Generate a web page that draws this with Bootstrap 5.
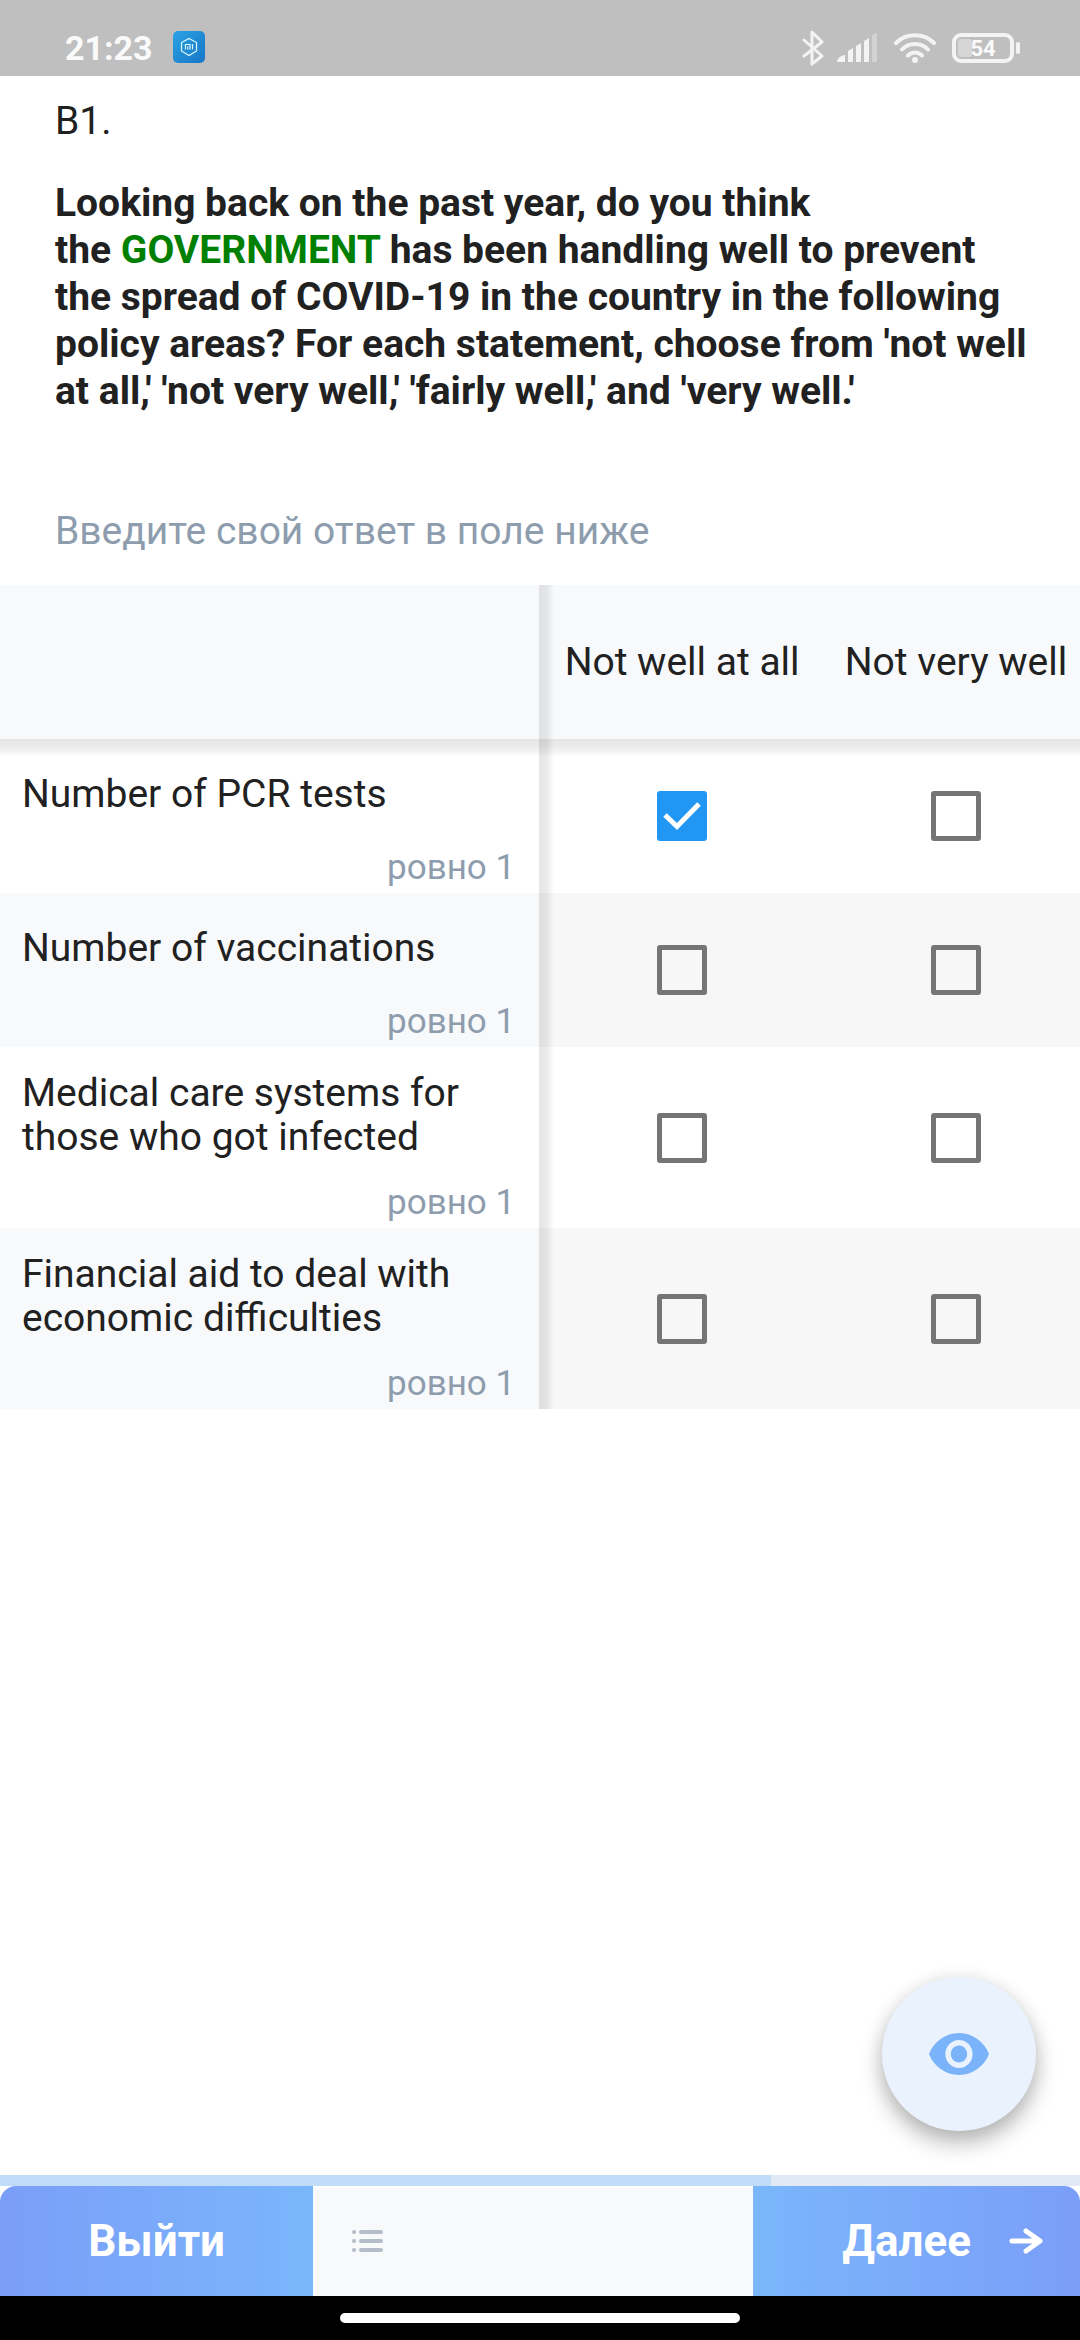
<!DOCTYPE html>
<html lang="ru">
<head>
<meta charset="utf-8">
<meta name="viewport" content="width=device-width, initial-scale=1">
<title>B1</title>
<link href="https://cdn.jsdelivr.net/npm/bootstrap@5.3.0/dist/css/bootstrap.min.css" rel="stylesheet">
<style>
  body { font-family: Roboto, sans-serif; font-size: 39px; line-height: 44px; color: #212121; background: #fff; }
  svg { display: block; flex: none; }

  .status-bar { height: 76px; padding: 20px 60px 0 65px; background: #bfbfbf; color: #fafafa; }
  .status-time { font-size: 34px; font-weight: 700; line-height: 40px; }
  .status-icons { color: #f3f3f3; }

  .question { padding: 22px 45px 0 55px; line-height: 47px; }
  .question-text { margin-top: 35px; font-weight: 700; }
  .question-text em { font-style: normal; color: #008000; }
  .question-hint { margin-top: 93px; padding-bottom: 30px; color: #8e9dae; }

  .grid-wrap { overflow: hidden; }
  .answers { width: calc(100% + 7px); table-layout: fixed; }
  .answers th, .answers td { border: 0; padding: 0; font-weight: 400; color: inherit; vertical-align: middle; }
  .answers .col-area { width: 49.6%; }
  .answers thead th { height: 154px; background-color: #f8f9fb; text-align: center; }
  .answers tbody th { padding: 24px 24px 5px 22px; background-color: #fff; }
  .answers tbody tr:nth-child(even) th { background-color: #f8f9fb; }
  .answers tbody tr:nth-child(even) td { background-color: #f7f7f7; }
  .answers td { text-align: center; }
  .answers th:not(:first-child), .answers td { padding-left: 12px; }
  .area-label { min-height: 61px; }
  .area-rule { margin-top: 24px; font-size: 35px; line-height: 40px; color: #8e9dae; }

  .answers { --edge-x: linear-gradient(90deg, rgba(0,0,0,.1), rgba(0,0,0,.08) 8px, transparent 15px);
             --edge-y: linear-gradient(180deg, rgba(0,0,0,.1), rgba(0,0,0,.08) 8px, transparent 18px); }
  .answers tr > :nth-child(2) { background-image: var(--edge-x); }
  .answers tbody tr:first-child > * { background-image: var(--edge-y); }
  .answers tbody tr:first-child > :nth-child(2) { background-image: var(--edge-x), var(--edge-y); }

  .answers .form-check-input { display: inline-block; float: none; width: 50px; height: 50px; margin: 0; vertical-align: middle;
    border: 5px solid #757575; border-radius: 3px; background-color: transparent; }
  .answers .form-check-input:checked { border-color: #2196f3; background-color: #2196f3; background-size: 50px 50px; background-origin: border-box;
    background-image: url("data:image/svg+xml,%3Csvg xmlns='http://www.w3.org/2000/svg' viewBox='0 0 50 50'%3E%3Cpath d='M8 24 20 35.500 42 13' fill='none' stroke='%23fff' stroke-width='5'/%3E%3C/svg%3E"); }

  .fab { right: 44px; bottom: 44px; width: 154px; height: 154px; padding: 0; border: 0; background: #eaf2fe; color: #7ab3fa;
    box-shadow: 0 12px 22px rgba(0,0,0,.28), 0 0 18px rgba(0,0,0,.07); }
  .fab:hover { background: #dfebfd; color: #7ab3fa; }

  .survey-progress { height: 11px; border-radius: 0; background: #e1e9f6; }
  .survey-progress .progress-bar { background: #c1dcf8; }
  .action-bar { height: 110px; background: #fff; }
  .action { border: 0; color: #fff; font-size: 44px; font-weight: 700; line-height: 52px; }
  .action-exit { width: 29%; padding: 0; border-radius: 16px 0 0 0; background: linear-gradient(90deg, #7b9ef9, #7ab6fa); }
  .action-next { width: 30.3%; padding: 0 37px 0 0; gap: 38px; border-radius: 0 16px 0 0; background: linear-gradient(90deg, #7ab6fa, #7b9ef9); }
  .action-mid { background: #f8f9fb; border-top: 2px solid #fff; }
  .action-list { padding: 0 0 2px 39px; border: 0; background: none; color: #b4bdc9; }
  .gesture-bar { height: 44px; background: #000; }
  .gesture-pill { width: 37%; height: 10px; background: #fff; }
</style>
</head>
<body class="d-flex flex-column min-vh-100">

<header class="status-bar d-flex justify-content-between">
  <div class="d-flex gap-3">
    <span class="status-time pt-2">21:23</span>
    <svg class="mt-2 ms-1" width="32" height="38" viewBox="0 -3 32 38" aria-hidden="true">
      <defs><linearGradient id="g" x2="1" y2="1"><stop stop-color="#2aa3e4"/><stop offset="1" stop-color="#1775c6"/></linearGradient></defs>
      <rect width="32" height="32" rx="5" fill="url(#g)"/>
      <g fill="none" stroke="#dff7ff" stroke-width="1.200"><path d="M16 7.500 23.500 11.500v8.500L16 24.500 8.500 20v-8.500z"/><path d="M12.500 18.500v-5h4.500v5M14.800 15.500v3M19.500 13V18.500"/></g>
    </svg>
  </div>
  <div class="status-icons d-flex align-items-center">
    <svg width="22" height="36" viewBox="0 0 22 36" fill="none" stroke="currentColor" stroke-width="3" stroke-linecap="round" stroke-linejoin="round" aria-hidden="true"><path d="M2 10 20 26 10 34V2L20 12 2 26"/></svg>
    <svg class="ms-2 me-3" width="46" height="30" viewBox="-5 0 46 30" fill="currentColor" aria-hidden="true"><path d="M0 29c0-4 5-7 8-7v7zM11 18l5-3v14h-5zM19 13l5-3v19h-5zM27 8l5-3v24h-5z"/><path opacity=".4" d="M35 2l5-2v29h-5z"/></svg>
    <svg width="42" height="31" viewBox="0 0 42 31" fill="none" stroke="currentColor" stroke-width="4" stroke-linecap="round" aria-hidden="true"><path d="M2 10C12-.5 30-.5 40 10M8 16.500c7-7.500 19-7.500 26 0M14 22.500c4-4 10-4 14 0"/><circle cx="21" cy="27" r="2" fill="currentColor" stroke-width="2"/></svg>
    <svg class="ms-3" width="68" height="30" viewBox="0 0 68 30" aria-hidden="true"><rect x="2" y="2" width="58" height="26" rx="7" fill="none" stroke="currentColor" stroke-width="4"/><rect x="6" y="6" width="14" height="18" rx="3" fill="#d6d6d6"/><rect x="64" y="9" width="4" height="12" rx="2" fill="currentColor"/><text x="31" y="23" text-anchor="middle" font-size="22" font-weight="700" fill="#fafafa">54</text></svg>
  </div>
</header>

<main class="flex-grow-1 position-relative">
  <section class="question">
    <div>B1.</div>
    <p class="question-text mb-0">Looking back on the past year, do you think the&nbsp;<em>GOVERNMENT</em> has been handling well to prevent the spread of COVID-19 in the country in the following policy areas? For each statement, choose from 'not well at all,' 'not very well,' 'fairly well,' and 'very well.'</p>
    <p class="question-hint mb-0">Введите свой ответ в поле ниже</p>
  </section>

  <div class="grid-wrap">
    <table class="answers">
      <thead>
        <tr><th class="col-area"></th><th scope="col" id="c1">Not well at all</th><th scope="col" id="c2">Not very well</th></tr>
      </thead>
      <tbody>
        <tr>
          <th scope="row"><div class="area-label d-flex align-items-center" id="r1">Number of PCR tests</div><div class="area-rule text-end">ровно 1</div></th>
          <td><input class="form-check-input" type="checkbox" aria-labelledby="r1 c1" checked></td>
          <td><input class="form-check-input" type="checkbox" aria-labelledby="r1 c2"></td>
        </tr>
        <tr>
          <th scope="row"><div class="area-label d-flex align-items-center" id="r2">Number of vaccinations</div><div class="area-rule text-end">ровно 1</div></th>
          <td><input class="form-check-input" type="checkbox" aria-labelledby="r2 c1"></td>
          <td><input class="form-check-input" type="checkbox" aria-labelledby="r2 c2"></td>
        </tr>
        <tr>
          <th scope="row"><div class="area-label d-flex align-items-center" id="r3">Medical care systems for those who got infected</div><div class="area-rule text-end">ровно 1</div></th>
          <td><input class="form-check-input" type="checkbox" aria-labelledby="r3 c1"></td>
          <td><input class="form-check-input" type="checkbox" aria-labelledby="r3 c2"></td>
        </tr>
        <tr>
          <th scope="row"><div class="area-label d-flex align-items-center" id="r4">Financial aid to deal with economic difficulties</div><div class="area-rule text-end">ровно 1</div></th>
          <td><input class="form-check-input" type="checkbox" aria-labelledby="r4 c1"></td>
          <td><input class="form-check-input" type="checkbox" aria-labelledby="r4 c2"></td>
        </tr>
      </tbody>
    </table>
  </div>

  <button class="fab btn rounded-circle position-absolute d-flex align-items-center justify-content-center" type="button" aria-label="Просмотр">
    <svg width="60" height="42" viewBox="1 4.500 22 15" preserveAspectRatio="none" fill="currentColor" aria-hidden="true"><path d="M12 4.500C7 4.500 2.730 7.610 1 12c1.730 4.390 6 7.500 11 7.500s9.270-3.110 11-7.500c-1.730-4.390-6-7.500-11-7.500zM12 17c-2.760 0-5-2.240-5-5s2.240-5 5-5 5 2.240 5 5-2.240 5-5 5zm0-8c-1.660 0-3 1.340-3 3s1.340 3 3 3 3-1.340 3-3-1.340-3-3-3z"/></svg>
  </button>
</main>

<footer>
  <div class="survey-progress progress" role="progressbar" aria-valuenow="71" aria-valuemin="0" aria-valuemax="100">
    <div class="progress-bar" style="width: 71.4%"></div>
  </div>
  <div class="action-bar d-flex">
    <button class="action action-exit" type="button">Выйти</button>
    <div class="action-mid flex-grow-1 d-flex">
      <button class="action-list" type="button" aria-label="Список вопросов">
        <svg width="31" height="22" viewBox="0 0 31 22" fill="none" stroke="currentColor" stroke-width="4" stroke-linecap="round" aria-hidden="true"><path d="M2 2h.1M2 11h.1M2 20h.1M9 2h20M9 11h20M9 20h20"/></svg>
      </button>
    </div>
    <button class="action action-next d-flex align-items-center justify-content-end" type="button">Далее
      <svg width="34" height="26" viewBox="0 0 34 26" fill="none" stroke="currentColor" stroke-width="5" stroke-linecap="round" stroke-linejoin="round" aria-hidden="true"><path d="M3 13h28M17 3l14 10-14 10"/></svg>
    </button>
  </div>
  <div class="gesture-bar d-flex justify-content-center align-items-center"><div class="gesture-pill rounded-pill"></div></div>
</footer>

<script src="https://cdn.jsdelivr.net/npm/bootstrap@5.3.0/dist/js/bootstrap.bundle.min.js"></script>
</body>
</html>
